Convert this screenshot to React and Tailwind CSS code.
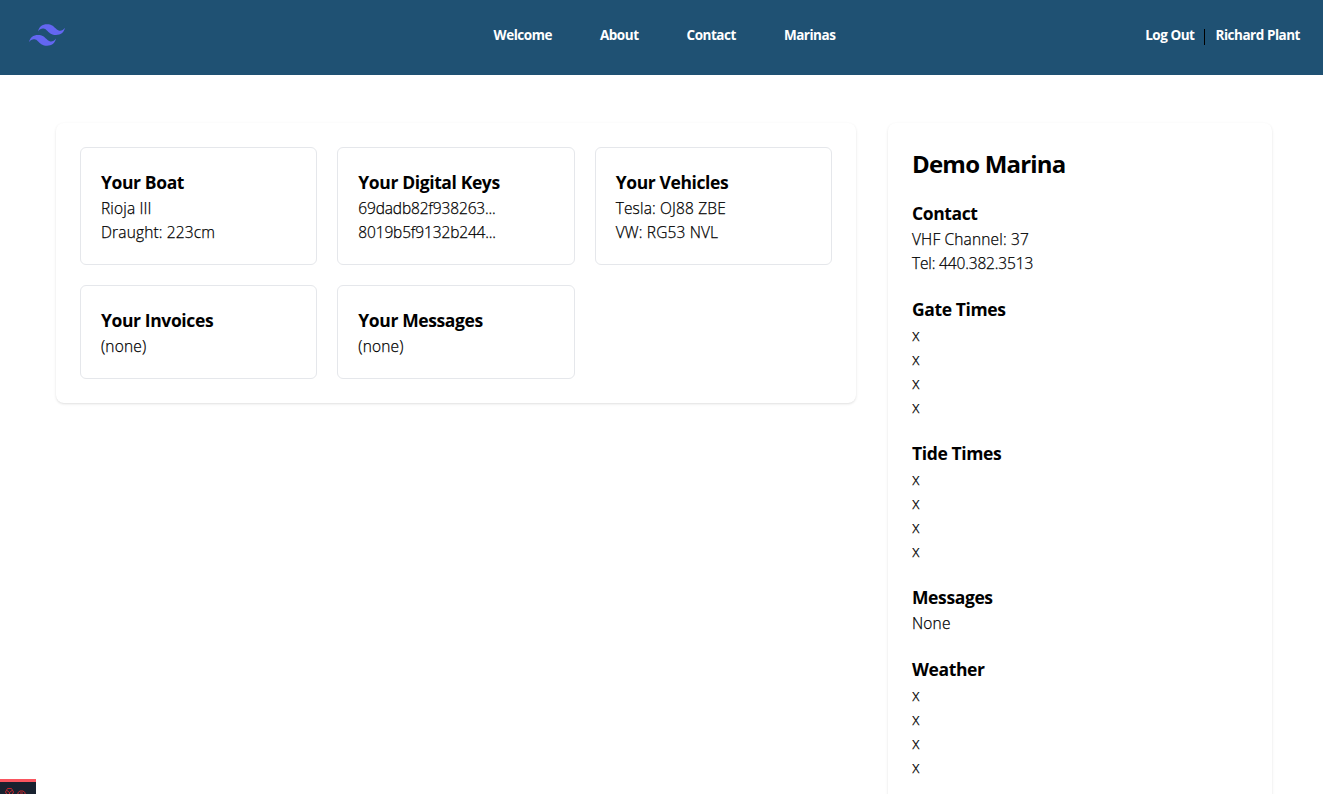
const cards = [
  { title: "Your Boat", lines: ["Rioja III", "Draught: 223cm"] },
  { title: "Your Digital Keys", lines: ["69dadb82f938263...", "8019b5f9132b244..."] },
  { title: "Your Vehicles", lines: ["Tesla: OJ88 ZBE", "VW: RG53 NVL"] },
  { title: "Your Invoices", lines: ["(none)"] },
  { title: "Your Messages", lines: ["(none)"] },
];

const sections = [
  { title: "Contact", lines: ["VHF Channel: 37", "Tel: 440.382.3513"] },
  { title: "Gate Times", lines: ["x", "x", "x", "x"] },
  { title: "Tide Times", lines: ["x", "x", "x", "x"] },
  { title: "Messages", lines: ["None"] },
  { title: "Weather", lines: ["x", "x", "x", "x"] },
];

// Digit-heavy lines are set slightly tighter than ordinary words.
const tracking = (line) =>
  line.replace(/\D/g, "").length > 7 ? "tracking-[-0.01em]" : "tracking-[0.01em]";

function Logo() {
  return (
    <svg className="h-[22px] w-9" viewBox="0 0 54 32.4" fill="#6366f1" aria-hidden="true">
      <path d="M27 0c-7.2 0-11.7 3.6-13.5 10.8 2.7-3.6 5.85-4.95 9.45-4.05 2.054.513 3.522 2.004 5.147 3.653C30.744 13.09 33.808 16.2 40.5 16.2c7.2 0 11.7-3.6 13.5-10.8-2.7 3.6-5.85 4.95-9.45 4.05-2.054-.513-3.522-2.004-5.147-3.653C36.756 3.11 33.692 0 27 0zM13.5 16.2C6.3 16.2 1.8 19.8 0 27c2.7-3.6 5.85-4.95 9.45-4.05 2.054.514 3.522 2.004 5.147 3.653C17.244 29.29 20.308 32.4 27 32.4c7.2 0 11.7-3.6 13.5-10.8-2.7 3.6-5.85 4.95-9.45 4.05-2.054-.513-3.522-2.004-5.147-3.653C23.256 19.31 20.192 16.2 13.5 16.2z" />
    </svg>
  );
}

function TextBlock({ title, lines }) {
  return (
    <div>
      <h2 className="text-[17.5px] leading-7 font-bold tracking-[-0.022em]">{title}</h2>
      {lines.map((line, i) => (
        <p
          key={i}
          className={`text-[15.5px] leading-6 font-light [-webkit-text-stroke:0.25px_#000] ${tracking(line)}`}
        >
          {line}
        </p>
      ))}
    </div>
  );
}

function Toolbar() {
  return (
    <div className="fixed bottom-0 left-0 flex h-[15px] w-9 items-start gap-[3px] overflow-hidden border-t-[3px] border-[#f9555f] bg-[#18212f] pt-[6px] pl-[5px]">
      <svg className="size-[9px] shrink-0" viewBox="0 0 9 9" fill="none" stroke="#c4262c" strokeWidth="1">
        <path d="M2.5 .5h4l2 3.5-2 3.5h-4L.5 4zM2 2.5l2.5 2 2.5-2M4.5 4.5v3" />
      </svg>
      <svg className="mt-[2px] size-[9px] shrink-0" viewBox="0 0 9 9" fill="none" stroke="#c4262c" strokeWidth="1">
        <path d="M.5 3l2.5-2h3l2.5 2-2 2h-4zM3 3h3" />
      </svg>
    </div>
  );
}

export default function App() {
  return (
    <div className="h-screen overflow-hidden bg-white font-['Open_Sans',sans-serif] text-black">
      <header className="flex h-[75px] items-start bg-[#1f5173] pt-6 pr-[23px] pl-[29px] text-[13.5px] leading-[22px] font-bold text-white">
        <div className="flex flex-1"><Logo /></div>
        <nav className="flex gap-12 tracking-[-0.035em]">
          <a>Welcome</a>
          <a>About</a>
          <a>Contact</a>
          <a>Marinas</a>
        </nav>
        <div className="flex flex-1 items-center justify-end tracking-[-0.035em]">
          <a>Log Out</a>
          <span className="mt-[3px] mr-[10px] ml-[10px] h-4 w-px bg-black" />
          <a>Richard Plant</a>
        </div>
      </header>
      <main className="flex items-start gap-8 px-14 pt-12">
        <section className="grid w-[800px] shrink-0 grid-cols-3 gap-5 rounded-lg bg-white p-6 shadow-sm">
          {cards.map((card) => (
            <div key={card.title} className="rounded-md border border-gray-200 p-5">
              <TextBlock title={card.title} lines={card.lines} />
            </div>
          ))}
        </section>
        <aside className="flex w-96 shrink-0 flex-col gap-5 rounded-lg bg-white p-6 shadow-sm">
          <h1 className="pt-0.5 text-2xl leading-[30px] font-bold tracking-[-0.033em]">Demo Marina</h1>
          {sections.map((section) => (
            <TextBlock key={section.title} title={section.title} lines={section.lines} />
          ))}
        </aside>
      </main>
      <Toolbar />
    </div>
  );
}
